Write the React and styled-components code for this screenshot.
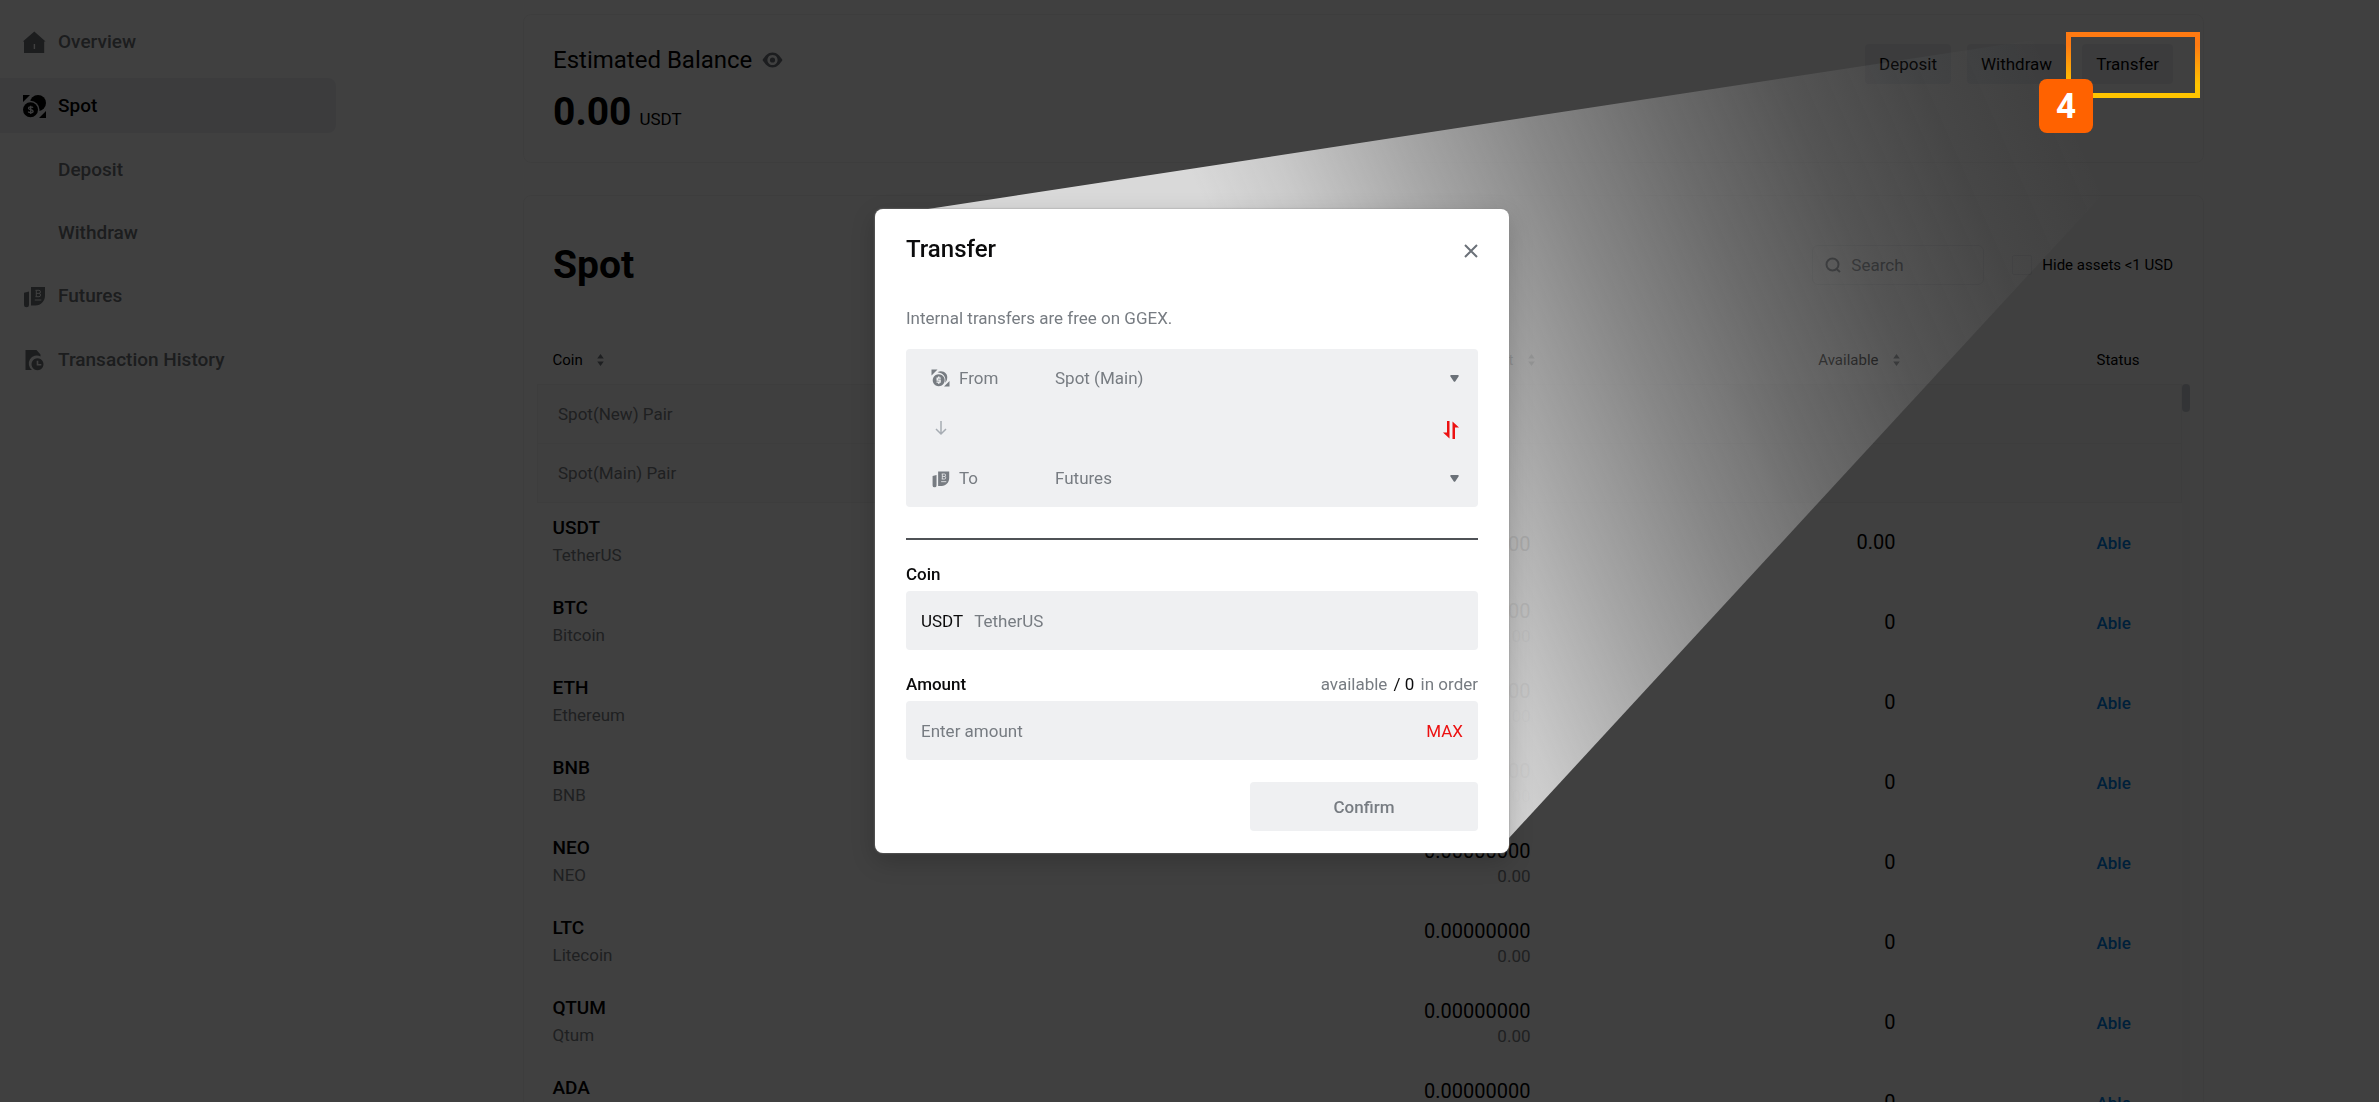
import React, { useState } from "react";
import styled, { createGlobalStyle } from "styled-components";

const GlobalStyle = createGlobalStyle`
  * { box-sizing: border-box; }
  body {
    margin: 0;
    background: #fff;
    color: #000;
    font-family: Roboto, "Liberation Sans", sans-serif;
    font-size: 17px;
  }
  button, input, select { font-family: inherit; font-size: inherit; }
  h1, h2, p { margin: 0; }
`;

const Page = styled.div`
  display: flex;
  height: 100vh;
  overflow: hidden;
`;

const Sidebar = styled.nav`
  width: 336px;
  flex-shrink: 0;
  padding-top: 14px;
  display: flex;
  flex-direction: column;
  gap: 9px;
`;

const MenuLink = styled.a`
  display: flex;
  align-items: center;
  gap: 12px;
  height: ${(props) => (props.$sub ? 54 : 55)}px;
  padding-left: ${(props) => (props.$sub ? 58 : 22)}px;
  border-radius: 0 8px 8px 0;
  font-size: 19px;
  font-weight: 500;
  text-decoration: none;
  color: ${(props) => (props.$active ? "#000" : "#707479")};
  background: ${(props) => (props.$active ? "#eff0f4" : "transparent")};
`;

const Main = styled.main`
  flex: 1;
  min-width: 0;
  margin: 14px 175px 0 187px;
  display: flex;
  flex-direction: column;
  gap: 32px;
`;

const Card = styled.section`
  border: 1px solid #f4f4f4;
  border-radius: 8px;
  flex-shrink: 0;
`;

const BalanceCard = styled(Card)`
  display: flex;
  justify-content: space-between;
  align-items: flex-start;
  height: 149px;
  padding: 29px 30px 29px 29px;
`;

const BalanceTitle = styled.h2`
  display: flex;
  align-items: center;
  gap: 10px;
  font-size: 24px;
  line-height: 32px;
  font-weight: 400;
`;

const Balance = styled.p`
  margin-top: 12px;
  font-size: 39px;
  line-height: 48px;
  font-weight: 700;
  span {
    margin-left: 8px;
    font-size: 17px;
    font-weight: 400;
  }
`;

const Actions = styled.div`
  display: flex;
  gap: 16px;
`;

const ActionButton = styled.button`
  height: 40px;
  padding: 0 14px;
  border: 0;
  border-radius: 4px;
  background: #eff0f4;
  color: #000;
`;

const SpotCard = styled(Card)`
  flex: 1 0 auto;
`;

const SpotHead = styled.div`
  display: flex;
  justify-content: space-between;
  align-items: center;
  padding: 44px 30px 0 29px;
`;

const SpotTitle = styled.h1`
  font-size: 39px;
  line-height: 50px;
  font-weight: 700;
`;

const Filters = styled.div`
  display: flex;
  align-items: center;
  gap: 28px;
`;

const SearchBox = styled.label`
  display: flex;
  align-items: center;
  gap: 10px;
  width: 172px;
  height: 40px;
  padding: 0 12px;
  border: 1px solid #eceef0;
  border-radius: 6px;
  color: #70757c;
  input {
    width: 100px;
    padding: 0;
    border: 0;
    outline: 0;
    background: none;
  }
  input::placeholder { color: #70757c; opacity: 1; }
`;

const HideAssets = styled.label`
  display: flex;
  align-items: center;
  gap: 10px;
  font-size: 15px;
  input {
    appearance: none;
    width: 20px;
    height: 20px;
    margin: 0;
    border: 1px solid #eceef0;
    border-radius: 2px;
  }
`;

const ScrollArea = styled.div`
  display: grid;
  grid-template-columns: 1fr 8px;
  padding: 46px 13px 0;
`;

const Track = styled.div`
  margin-top: 48px;
  background: #fafafa;
`;

const Thumb = styled.div`
  height: 28px;
  border-radius: 4px;
  background: #ccd0d8;
`;

const Table = styled.table`
  width: 100%;
  table-layout: fixed;
  border-collapse: collapse;
`;

const Th = styled.th`
  width: ${(props) => props.$width || "auto"};
  height: 48px;
  padding: 0;
  padding-left: ${(props) => props.$pad || 0}px;
  text-align: ${(props) => props.$align || "left"};
  font-size: 15px;
  font-weight: 400;
`;

const SortButton = styled.button`
  display: inline-flex;
  align-items: center;
  gap: 14px;
  margin-right: -4px;
  padding: 0;
  border: 0;
  background: none;
  font-size: 15px;
  color: #000;
`;

const PairRow = styled.tr`
  height: 59px;
  background: #fafafa;
  border: 1px solid #f2f2f3;
  color: #7b7f85;
  td { padding: 0 20px; }
`;

const Td = styled.td`
  height: 80px;
  padding: 0;
  padding-left: ${(props) => props.$pad || 0}px;
  text-align: ${(props) => props.$align || "left"};
  font-size: 20px;
`;

const CoinTd = styled(Td)`
  padding-bottom: 2px;
  font-size: 19px;
`;

const TotalTd = styled(Td)`
  padding-top: 4px;
`;

const Symbol = styled.div`
  line-height: 28px;
  font-weight: 500;
`;

const Sub = styled.div`
  font-size: 17px;
  line-height: 26px;
  color: #7b7f85;
`;

const Amount = styled.div`
  line-height: 24px;
`;

const StatusLink = styled.a`
  font-size: 17px;
  font-weight: 500;
  color: #0080e6;
  text-decoration: none;
`;

const Shade = styled.div`
  position: fixed;
  inset: 0;
  display: flex;
  justify-content: center;
  align-items: flex-start;
  padding-top: 209px;
  padding-left: 5px;
  background: rgba(0, 0, 0, 0.75);
`;

const Beam = styled.svg`
  position: absolute;
  inset: 0;
  width: 100%;
  height: 100%;
`;

const Highlight = styled.div`
  position: absolute;
  top: 32px;
  right: 179px;
  width: 134px;
  height: 66px;
  border: 5px solid;
  border-image: linear-gradient(#ff7a12 20%, #ffc400 80%) 5;
`;

const Step = styled.div`
  position: absolute;
  top: 42px;
  left: -32px;
  width: 54px;
  height: 54px;
  border-radius: 8px;
  background: #ff6200;
  color: #fff;
  font-size: 35px;
  line-height: 56px;
  font-weight: 700;
  text-align: center;
`;

const Dialog = styled.div`
  position: relative;
  width: 634px;
  padding: 24px 31px 22px;
  border-radius: 8px;
  background: #fff;
  box-shadow: 0 0 2px #888, 0 8px 24px rgba(0, 0, 0, 0.2);
`;

const DialogHead = styled.div`
  display: flex;
  justify-content: space-between;
  align-items: center;
  h2 {
    font-size: 24px;
    line-height: 32px;
    font-weight: 500;
    color: #0b0b0c;
  }
  button {
    display: flex;
    padding: 4px 0 0;
    border: 0;
    background: none;
  }
`;

const Note = styled.p`
  margin-top: 40px;
  line-height: 26px;
  color: #777c82;
`;

const Route = styled.div`
  margin-top: 18px;
  height: 158px;
  padding: 9px 19px 9px 25px;
  display: flex;
  flex-direction: column;
  justify-content: space-between;
  border-radius: 4px;
  background: #eff0f2;
  color: #777c82;
`;

const RouteRow = styled.div`
  display: flex;
  align-items: center;
  height: 40px;
  label {
    display: flex;
    align-items: center;
    gap: 9px;
    width: 124px;
  }
  select {
    flex: 1;
    appearance: none;
    padding: 0;
    border: 0;
    outline: 0;
    background: none;
    color: inherit;
  }
`;

const SwapRow = styled.div`
  display: flex;
  justify-content: space-between;
  align-items: center;
  button {
    display: flex;
    padding: 4px 0 0;
    border: 0;
    background: none;
  }
`;

const Divider = styled.hr`
  margin: 31px 0 22px;
  border: 0;
  border-top: 2px solid #4f5256;
`;

const LabelRow = styled.div`
  display: flex;
  justify-content: space-between;
  line-height: 24px;
  label {
    font-weight: 500;
    color: #0b0b0c;
  }
  span { color: #777c82; }
  b {
    margin: 0 2px;
    font-weight: 400;
    color: #0b0b0c;
  }
`;

const Field = styled.div`
  display: flex;
  align-items: center;
  height: 59px;
  margin: 5px 0 22px;
  padding: 0 15px;
  border-radius: 4px;
  background: #eff0f2;
  input {
    flex: 1;
    min-width: 0;
    padding: 0;
    border: 0;
    outline: 0;
    background: none;
  }
  input::placeholder { color: #777c82; opacity: 1; }
`;

const CoinPicker = styled.button`
  display: flex;
  flex: 1;
  gap: 11px;
  padding: 0;
  border: 0;
  background: none;
  color: #0b0b0c;
  span { color: #777c82; }
`;

const MaxButton = styled.button`
  padding: 0;
  border: 0;
  background: none;
  color: #ec1111;
`;

const ConfirmButton = styled.button`
  display: block;
  width: 228px;
  height: 49px;
  margin-left: auto;
  border: 0;
  border-radius: 4px;
  background: #eff0f2;
  color: #777c82;
  font-weight: 500;
`;

const HomeIcon = () => (
  <svg width="24" height="24" viewBox="0 0 24 24" fill="currentColor" aria-hidden="true">
    <path fillRule="evenodd" d="M12.3 1.6 23.6 11.4H22.2V23H2V11.4H.8ZM11.7 14v5h1.4v-5Z" />
  </svg>
);

const SpotIcon = ({ size = 24, cut }) => (
  <svg width={size} height={size} viewBox="0 0 24 24" fill="currentColor" aria-hidden="true">
    <path d="M1 1h7L1 8ZM24 24h-7l7-7Z" />
    <circle cx="16" cy="9" r="8" />
    <circle cx="8.500" cy="15.800" r="9" fill={cut} />
    <circle cx="8.500" cy="15.800" r="7.500" />
    <path d="M11 13.600c-.6-1-4.500-1.300-4.500.6 0 2.100 4.600.8 4.600 3 0 2-4.200 1.700-4.900.4M8.700 11.700v8.200" fill="none" stroke={cut} strokeWidth="1.300" />
  </svg>
);

const CoinSwapIcon = () => (
  <svg width="19" height="19" viewBox="0 0 19 19" fill="currentColor" aria-hidden="true">
    <path d="M.5.500h6l-6 6ZM18.500 17.500h-5.500l5.500-5.500Z" />
    <path d="M6.500 3.300C11 .6 17.800 4 16 10.500c-.4 1.500-1 2.400-1.800 3.300C15.500 8 12 4 6.500 3.300Z" />
    <path fillRule="evenodd" d="M7.700 5.200a6 6 0 1 0 .01 0ZM7 7.500h1.500v1h1.300v1.300H7v.8h2.800v3.200H8.500v.9H7v-.9H5.500v-1.300h2.900v-.7H5.500V8.500H7Z" />
  </svg>
);

const FuturesIcon = ({ size = 24, cut }) => (
  <svg width={size} height={size} viewBox="0 0 24 24" fill="currentColor" aria-hidden="true">
    <path d="M2 8.800 7 7.500v13.200a2.500 2.500 0 0 1-5 0ZM9 3h14v8.500c0 5.500-4 10-9.500 10H9Z" />
    <path d="M13.500 6.300h3.400a1.500 1.500 0 0 1 0 3.100h-2.600M16.900 9.400a1.600 1.600 0 0 1 0 3.300h-3.400M14.300 6.300v6.400M12.800 16h6.500" fill="none" stroke={cut} strokeWidth="1" />
  </svg>
);

const HistoryIcon = () => (
  <svg width="24" height="24" viewBox="0 0 24 24" fill="currentColor" aria-hidden="true">
    <path d="M3.500 2h11l4 4.500v2a8 8 0 0 0-8.500 13.500H3.500Z" />
    <path fillRule="evenodd" d="M15.500 10.200a6 6 0 1 0 .01 0ZM14.700 12.700h1.600v3.200h3v1.600h-4.600Z" />
  </svg>
);

const EyeIcon = () => (
  <svg width="21" height="16" viewBox="0 0 21 16" aria-hidden="true">
    <path fillRule="evenodd" fill="#70757c" d="M10.500.5C15 .5 18 4 20.500 8c-2.500 4-5.500 7.500-10 7.500S3 12 .5 8C3 4 6 .5 10.500.5ZM10.500 2.900a5.100 5.100 0 1 0 .01 0Z" />
    <circle cx="10.500" cy="8" r="2.600" fill="#70757c" />
  </svg>
);

const SearchIcon = () => (
  <svg width="16" height="16" viewBox="0 0 16 16" fill="none" stroke="currentColor" strokeWidth="2" aria-hidden="true">
    <circle cx="7.500" cy="7.500" r="6" />
    <path d="m11 11.500 4 3.500" />
  </svg>
);

const SortIcon = () => (
  <svg width="7" height="12" viewBox="0 0 7 12" fill="#777c82" aria-hidden="true">
    <path d="M3.500 0 6.800 4.500H.2ZM3.500 12 6.800 7.500H.2Z" />
  </svg>
);

const CaretIcon = () => (
  <svg width="9" height="7" viewBox="0 0 9 7" fill="#6b7178" aria-hidden="true">
    <path d="M1 0h7a.8.8 0 0 1 .7 1.200L5.200 6.400a.8.8 0 0 1-1.400 0L.3 1.200A.8.8 0 0 1 1 0Z" />
  </svg>
);

const CloseIcon = () => (
  <svg width="14" height="14" viewBox="0 0 14 14" stroke="#6b7178" strokeWidth="2" aria-hidden="true">
    <path d="m1 1 12 12M13 1 1 13" />
  </svg>
);

const DownIcon = () => (
  <svg width="20" height="16" viewBox="0 0 20 16" fill="none" stroke="#a6acb3" strokeWidth="1.500" aria-hidden="true">
    <path d="M10 1v13M5 9l5 5 5-5" />
  </svg>
);

const SwapIcon = () => (
  <svg width="16" height="18" viewBox="0 0 16 18" fill="#ec1111" aria-hidden="true">
    <path d="M4 0h2.500v17.500L0 11.500h4ZM9.500.5 16 6.500h-4V18H9.500Z" />
  </svg>
);

const pairs = ["Spot(New) Pair", "Spot(Main) Pair"];

const coins = [
  { symbol: "USDT", name: "TetherUS", total: "0.00", available: "0.00" },
  { symbol: "BTC", name: "Bitcoin", total: "0.00000000", value: "0.00", available: "0" },
  { symbol: "ETH", name: "Ethereum", total: "0.00000000", value: "0.00", available: "0" },
  { symbol: "BNB", name: "BNB", total: "0.00000000", value: "0.00", available: "0" },
  { symbol: "NEO", name: "NEO", total: "0.00000000", value: "0.00", available: "0" },
  { symbol: "LTC", name: "Litecoin", total: "0.00000000", value: "0.00", available: "0" },
  { symbol: "QTUM", name: "Qtum", total: "0.00000000", value: "0.00", available: "0" },
  { symbol: "ADA", name: "Cardano", total: "0.00000000", value: "0.00", available: "0" },
];

const CoinTable = () => (
  <Table>
    <thead>
      <tr>
        <Th $pad={15}><SortButton>Coin <SortIcon /></SortButton></Th>
        <Th $width="370px" $align="right"><SortButton>Amount <SortIcon /></SortButton></Th>
        <Th $width="365px" $align="right"><SortButton>Available <SortIcon /></SortButton></Th>
        <Th $width="286px" $pad={201}>Status</Th>
      </tr>
    </thead>
    <tbody>
      {pairs.map((pair) => (
        <PairRow key={pair}>
          <td colSpan={4}>{pair}</td>
        </PairRow>
      ))}
      {coins.map((coin) => (
        <tr key={coin.symbol}>
          <CoinTd $pad={15}>
            <Symbol>{coin.symbol}</Symbol>
            <Sub>{coin.name}</Sub>
          </CoinTd>
          <TotalTd $align="right">
            <Amount>{coin.total}</Amount>
            {coin.value && <Sub>{coin.value}</Sub>}
          </TotalTd>
          <Td $align="right">{coin.available}</Td>
          <Td $pad={201}><StatusLink href="#">Able</StatusLink></Td>
        </tr>
      ))}
    </tbody>
  </Table>
);

const TransferDialog = () => {
  const [accounts, setAccounts] = useState(["Spot (Main)", "Futures"]);
  const [amount, setAmount] = useState("");

  const handleSwap = () => setAccounts([accounts[1], accounts[0]]);

  return (
    <Dialog role="dialog" aria-labelledby="transfer-title">
      <DialogHead>
        <h2 id="transfer-title">Transfer</h2>
        <button aria-label="Close"><CloseIcon /></button>
      </DialogHead>
      <Note>Internal transfers are free on GGEX.</Note>
      <Route>
        <RouteRow>
          <label htmlFor="from"><CoinSwapIcon />From</label>
          <select id="from" value={accounts[0]} onChange={(e) => setAccounts([e.target.value, accounts[1]])}>
            <option>Spot (Main)</option>
            <option>Futures</option>
          </select>
          <CaretIcon />
        </RouteRow>
        <SwapRow>
          <DownIcon />
          <button aria-label="Swap accounts" onClick={handleSwap}><SwapIcon /></button>
        </SwapRow>
        <RouteRow>
          <label htmlFor="to"><FuturesIcon size={19} cut="#eff0f2" />To</label>
          <select id="to" value={accounts[1]} onChange={(e) => setAccounts([accounts[0], e.target.value])}>
            <option>Spot (Main)</option>
            <option>Futures</option>
          </select>
          <CaretIcon />
        </RouteRow>
      </Route>
      <Divider />
      <LabelRow><label htmlFor="coin">Coin</label></LabelRow>
      <Field>
        <CoinPicker id="coin">USDT <span>TetherUS</span></CoinPicker>
      </Field>
      <LabelRow>
        <label htmlFor="amount">Amount</label>
        <span>available <b>/ 0</b> in order</span>
      </LabelRow>
      <Field>
        <input id="amount" placeholder="Enter amount" value={amount} onChange={(e) => setAmount(e.target.value)} />
        <MaxButton>MAX</MaxButton>
      </Field>
      <ConfirmButton>Confirm</ConfirmButton>
    </Dialog>
  );
};

const App = () => (
  <>
    <GlobalStyle />
    <Page>
      <Sidebar>
        <MenuLink href="#"><HomeIcon />Overview</MenuLink>
        <MenuLink href="#" $active><SpotIcon cut="#eff0f4" />Spot</MenuLink>
        <MenuLink href="#" $sub>Deposit</MenuLink>
        <MenuLink href="#" $sub>Withdraw</MenuLink>
        <MenuLink href="#"><FuturesIcon cut="#fff" />Futures</MenuLink>
        <MenuLink href="#"><HistoryIcon />Transaction History</MenuLink>
      </Sidebar>
      <Main>
        <BalanceCard>
          <div>
            <BalanceTitle>Estimated Balance <EyeIcon /></BalanceTitle>
            <Balance>0.00<span>USDT</span></Balance>
          </div>
          <Actions>
            <ActionButton>Deposit</ActionButton>
            <ActionButton>Withdraw</ActionButton>
            <ActionButton>Transfer</ActionButton>
          </Actions>
        </BalanceCard>
        <SpotCard>
          <SpotHead>
            <SpotTitle>Spot</SpotTitle>
            <Filters>
              <SearchBox>
                <SearchIcon />
                <input placeholder="Search" aria-label="Search" />
              </SearchBox>
              <HideAssets><input type="checkbox" />Hide assets &lt;1 USD</HideAssets>
            </Filters>
          </SpotHead>
          <ScrollArea>
            <CoinTable />
            <Track><Thumb /></Track>
          </ScrollArea>
        </SpotCard>
      </Main>
    </Page>
    <Shade>
      <Beam viewBox="0 0 2379 1102" preserveAspectRatio="none" aria-hidden="true">
        <defs>
          <linearGradient id="beam" gradientUnits="userSpaceOnUse" x1="1300" y1="420" x2="2059" y2="85">
            <stop offset="0" stopColor="#d9d9d9" />
            <stop offset="0.1" stopColor="#d9d9d9" stopOpacity="0.9" />
            <stop offset="0.25" stopColor="#d9d9d9" stopOpacity="0.67" />
            <stop offset="0.4" stopColor="#d9d9d9" stopOpacity="0.46" />
            <stop offset="0.55" stopColor="#d9d9d9" stopOpacity="0.28" />
            <stop offset="0.7" stopColor="#d9d9d9" stopOpacity="0.13" />
            <stop offset="0.85" stopColor="#d9d9d9" stopOpacity="0.04" />
            <stop offset="1" stopColor="#d9d9d9" stopOpacity="0" />
          </linearGradient>
        </defs>
        <path d="M928 209 2066 35H2199V90L1509 838Z" fill="url(#beam)" />
      </Beam>
      <Highlight><Step>4</Step></Highlight>
      <TransferDialog />
    </Shade>
  </>
);

export default App;
